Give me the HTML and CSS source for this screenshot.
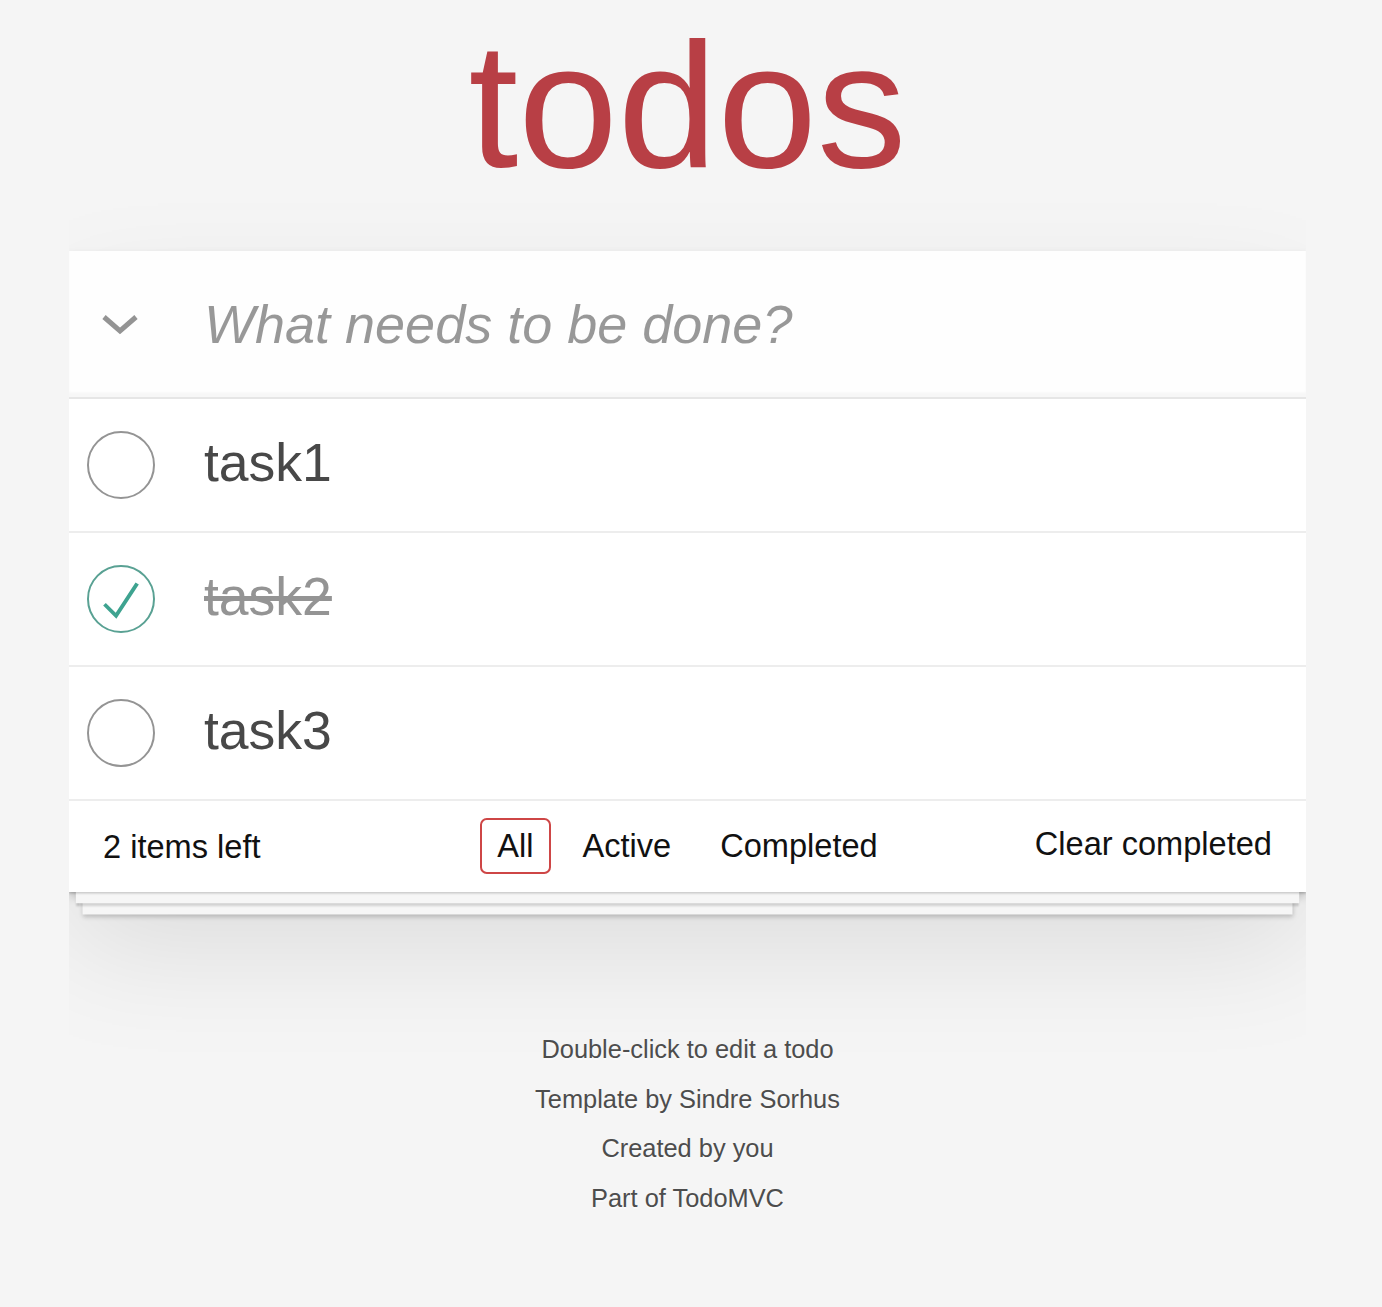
FILE: index.html
```html
<!DOCTYPE html>
<html lang="en">
  <head>
    <meta charset="UTF-8" />
    <meta name="viewport" content="width=device-width, initial-scale=1.0" />
    <title>Todos</title>
    <link rel="stylesheet" href="styles.css">
  </head>
  <body>
    <h1>todos</h1>
    <section class="todoapp">
      <header class="new-row">
        <label class="toggle-all" for="toggle-all">
          <svg width="38" height="21" viewBox="0 0 38 21">
            <polyline points="3,3 19,17 35,3" fill="none" stroke="#949494" stroke-width="5" />
          </svg>
        </label>
        <input id="toggle-all" class="toggle-input" type="checkbox" />
        <input class="new-todo" placeholder="What needs to be done?" />
      </header>

      <ul class="todo-list">
        <li>
          <span class="toggle">
            <svg width="68" height="68" viewBox="-1.5 -1.5 103 103">
              <circle cx="50" cy="50" r="50" fill="none" stroke="#949494" stroke-width="3" />
            </svg>
          </span>
          <label>task1</label>
        </li>
        <li class="completed">
          <span class="toggle">
            <svg width="68" height="68" viewBox="-1.5 -1.5 103 103">
              <circle cx="50" cy="50" r="50" fill="none" stroke="#59A193" stroke-width="3" />
              <path fill="#3EA390" d="M72 25L42 71 27 56l-4 4 20 20 34-52z" />
            </svg>
          </span>
          <label>task2</label>
        </li>
        <li>
          <span class="toggle">
            <svg width="68" height="68" viewBox="-1.5 -1.5 103 103">
              <circle cx="50" cy="50" r="50" fill="none" stroke="#949494" stroke-width="3" />
            </svg>
          </span>
          <label>task3</label>
        </li>
      </ul>

      <footer class="footer">
        <span class="todo-count"><strong>2</strong> items left</span>
        <ul class="filters">
          <li><a href="#/" class="selected">All</a></li>
          <li><a href="#/active">Active</a></li>
          <li><a href="#/completed">Completed</a></li>
        </ul>
        <button class="clear-completed">Clear completed</button>
      </footer>
    </section>

    <footer class="info">
      <p>Double-click to edit a todo</p>
      <p>Template by Sindre Sorhus</p>
      <p>Created by you</p>
      <p>Part of TodoMVC</p>
    </footer>
  </body>
</html>
```

FILE: styles.css
```css
html,
body {
  margin: 0;
  padding: 0;
}
body {
  font: 31.5px "Liberation Sans", Arial, sans-serif;
  line-height: 1.4em;
  background: #f5f5f5;
  color: #111111;
  width: 1237px;
  margin-left: 69px;
}
h1 {
  margin: 15px 0 56px;
  font-size: 179px;
  line-height: 180px;
  font-weight: 200;
  text-align: center;
  color: #b83f45;
}
.todoapp {
  background: #fff;
  box-shadow: 0 4.5px 9px 0 rgba(0, 0, 0, 0.2), 0 56px 112px 0 rgba(0, 0, 0, 0.1);
}
.new-row {
  display: flex;
  height: 146px;
  background: rgba(0, 0, 0, 0.003);
  box-shadow: inset 0 -4.5px 2.25px rgba(0, 0, 0, 0.03);
}
.toggle-all {
  width: 101px;
  display: flex;
  align-items: center;
  justify-content: center;
  flex-shrink: 0;
}
.toggle-input {
  display: none;
}
.new-todo {
  flex: 1;
  margin: 0;
  height: 146px;
  padding: 0 36px 0 34px;
  border: none;
  outline: none;
  font-family: inherit;
  font-size: 54px;
  color: #484848;
  background: transparent;
}
.new-todo::placeholder {
  font-style: italic;
  font-weight: 400;
  color: rgba(0, 0, 0, 0.4);
}
.todo-list {
  margin: 0;
  padding: 0;
  list-style: none;
  border-top: 2px solid #e6e6e6;
}
.todo-list li {
  display: flex;
  align-items: center;
  font-size: 53.5px;
  border-bottom: 2px solid #ededed;
}
.toggle {
  width: 135px;
  flex-shrink: 0;
  display: flex;
  align-items: center;
}
.toggle svg {
  margin-left: 17.5px;
}
.todo-list li label {
  display: block;
  padding: 32px 34px 36px 0;
  line-height: 64px;
  font-weight: 400;
  color: #484848;
}
.todo-list li.completed label {
  color: #949494;
  text-decoration: line-through;
}
.footer {
  display: grid;
  grid-template-columns: 1fr auto 1fr;
  align-items: center;
  height: 45px;
  padding: 20px 34px 26px;
  font-size: 32.6px;
  line-height: 45px;
  box-shadow: 0 2.25px 2.25px rgba(0, 0, 0, 0.2),
    0 18px 0 -6.75px #f6f6f6,
    0 20.25px 2.25px -6.75px rgba(0, 0, 0, 0.2),
    0 36px 0 -13.5px #f6f6f6,
    0 38.25px 4.5px -13.5px rgba(0, 0, 0, 0.2);
}
.todo-count strong {
  font-weight: 400;
}
.filters {
  display: flex;
  align-items: center;
  height: 45px;
  margin: 0;
  padding: 0;
  list-style: none;
}
.filters li a {
  display: block;
  color: inherit;
  margin: 0 6.75px;
  padding: 6.75px 15.75px;
  line-height: normal;
  text-decoration: none;
  border: 2.25px solid transparent;
  border-radius: 6.75px;
}
.filters li a.selected {
  border-color: #ce4646;
}
.clear-completed {
  justify-self: end;
  margin: 0 0 5px;
  padding: 0;
  border: 0;
  background: none;
  font: inherit;
  line-height: 45px;
  color: inherit;
}
.info {
  margin-top: 133px;
  color: #4d4d4d;
  font-size: 25.4px;
  text-shadow: 0 2.25px 0 rgba(255, 255, 255, 0.5);
  text-align: center;
}
.info p {
  margin: 0;
  line-height: 49.5px;
}
```
